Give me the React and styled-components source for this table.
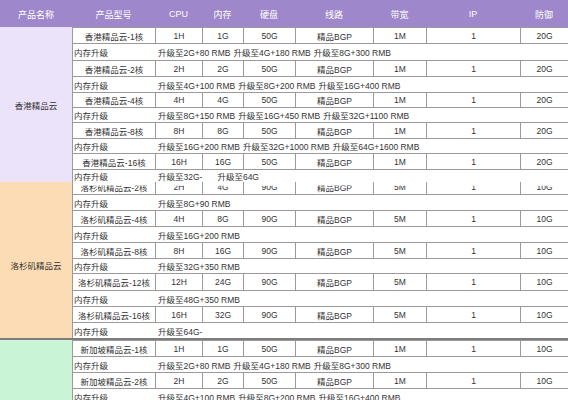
import React from 'react';
import styled, { createGlobalStyle } from 'styled-components';

const Global = createGlobalStyle`
  * { box-sizing: border-box; }
  html, body { margin: 0; padding: 0; background: #fff; }
  body { font-family: "Liberation Sans", "Noto Sans CJK SC", sans-serif; }
`;

const HEAD_COLS = '72px 83px 47px 41px 52px 78px 53px 94px 48px';
const BODY_COLS = '82px 47px 41px 52px 78px 53px 94px 48px';

const Page = styled.div`
  width: 568px;
  height: 400px;
  overflow: hidden;
  display: flex;
  flex-direction: column;
`;

const Header = styled.div`
  display: grid;
  grid-template-columns: ${HEAD_COLS};
  height: 27px;
  flex: none;
  background: #9e87ca;
`;

const HeadCell = styled.div`
  display: flex;
  align-items: center;
  justify-content: center;
  color: #fff;
  font-size: 9px;
  padding-top: 1px;
`;

const Section = styled.div`
  display: flex;
  flex: none;
  border-top: ${(p) => (p.$split ? '2px solid #7d7d7d' : 'none')};
`;

const Label = styled.div`
  width: 72px;
  flex: none;
  display: flex;
  align-items: center;
  justify-content: center;
  background: ${(p) => p.$bg};
  color: #333;
  font-size: 8.5px;
  padding-top: ${(p) => p.$shift || 0}px;
`;

const Body = styled.div`
  flex: 1;
  display: flex;
  flex-direction: column;
  border-left: 1px solid #9a9a9a;
  background: #fff;
`;

const ProductRow = styled.div`
  display: grid;
  grid-template-columns: ${BODY_COLS};
  height: ${(p) => p.$h}px;
  border-top: ${(p) => (p.$noTop ? 'none' : '1px solid #9a9a9a')};
  overflow: hidden;
`;

const Cell = styled.div`
  display: flex;
  align-items: center;
  justify-content: center;
  font-size: 8.5px;
  color: #333;
  white-space: nowrap;
  border-left: ${(p) => (p.$first ? 'none' : '1px solid #9a9a9a')};
`;

const Clipped = styled.span`
  clip-path: inset(38% 0 0 0);
  transform: translateY(-1px);
`;

const UpgradeRow = styled.div`
  display: flex;
  align-items: center;
  height: ${(p) => p.$h}px;
  border-top: 1px solid #9a9a9a;
  font-size: 8.5px;
  color: #333;
  white-space: nowrap;
`;

const UpgradeLabel = styled.div`
  width: 82px;
  flex: none;
  padding-left: 1px;
`;

const UpgradeText = styled.div`
  padding-left: 3px;
  display: flex;
  gap: 3px;
`;

const Part = styled.span`
  margin-left: ${(p) => p.$offset || 0}px;
`;

const head = ['产品名称', '产品型号', 'CPU', '内存', '硬盘', '线路', '带宽', 'IP', '防御'];

const sections = [
  {
    name: '香港精品云',
    bg: '#ebe3f9',
    rows: [
      { cells: ['香港精品云-1核', '1H', '1G', '50G', '精品BGP', '1M', '1', '20G'], h: 16, uh: 17,
        up: ['升级至2G+80 RMB', '升级至4G+180 RMB', '升级至8G+300 RMB'] },
      { cells: ['香港精品云-2核', '2H', '2G', '50G', '精品BGP', '1M', '1', '20G'], h: 16, uh: 16,
        up: ['升级至4G+100 RMB', '升级至8G+200 RMB', '升级至16G+400 RMB'] },
      { cells: ['香港精品云-4核', '4H', '4G', '50G', '精品BGP', '1M', '1', '20G'], h: 15, uh: 15,
        up: ['升级至8G+150 RMB', '升级至16G+450 RMB', '升级至32G+1100 RMB'] },
      { cells: ['香港精品云-8核', '8H', '8G', '50G', '精品BGP', '1M', '1', '20G'], h: 16, uh: 15,
        up: ['升级至16G+200 RMB', '升级至32G+1000 RMB', '升级至64G+1600 RMB'] },
      { cells: ['香港精品云-16核', '16H', '16G', '50G', '精品BGP', '1M', '1', '20G'], h: 16, uh: 13,
        up: ['升级至32G-', '升级至64G'], offsets: [0, 12] },
    ],
  },
  {
    name: '洛杉矶精品云',
    bg: '#fcdcb4',
    shift: 10,
    rows: [
      { cells: ['洛杉矶精品云-2核', '2H', '4G', '90G', '精品BGP', '5M', '1', '10G'], h: 12, uh: 16, clip: true,
        up: ['升级至8G+90 RMB'] },
      { cells: ['洛杉矶精品云-4核', '4H', '8G', '90G', '精品BGP', '5M', '1', '10G'], h: 16, uh: 16,
        up: ['升级至16G+200 RMB'] },
      { cells: ['洛杉矶精品云-8核', '8H', '16G', '90G', '精品BGP', '5M', '1', '10G'], h: 16, uh: 15,
        up: ['升级至32G+350 RMB'] },
      { cells: ['洛杉矶精品云-12核', '12H', '24G', '90G', '精品BGP', '5M', '1', '10G'], h: 17, uh: 16,
        up: ['升级至48G+350 RMB'] },
      { cells: ['洛杉矶精品云-16核', '16H', '32G', '90G', '精品BGP', '5M', '1', '10G'], h: 16, uh: 16,
        up: ['升级至64G-'] },
    ],
  },
  {
    name: '新加坡精品云',
    bg: '#c9f5d6',
    split: true,
    rows: [
      { cells: ['新加坡精品云-1核', '1H', '1G', '50G', '精品BGP', '1M', '1', '10G'], h: 16, uh: 16,
        up: ['升级至2G+80 RMB', '升级至4G+180 RMB', '升级至8G+300 RMB'] },
      { cells: ['新加坡精品云-2核', '2H', '2G', '50G', '精品BGP', '1M', '1', '10G'], h: 16, uh: 16,
        up: ['升级至4G+100 RMB', '升级至8G+200 RMB', '升级至16G+400 RMB'] },
      { cells: ['新加坡精品云-4核', '4H', '4G', '50G', '精品BGP', '1M', '1', '10G'], h: 16, uh: 16,
        up: ['升级至8G+150 RMB', '升级至16G+450 RMB', '升级至32G+1100 RMB'] },
      { cells: ['新加坡精品云-8核', '8H', '8G', '50G', '精品BGP', '1M', '1', '10G'], h: 16, uh: 16,
        up: ['升级至16G+200 RMB', '升级至32G+1000 RMB', '升级至64G+1600 RMB'] },
      { cells: ['新加坡精品云-16核', '16H', '16G', '50G', '精品BGP', '1M', '1', '10G'], h: 16, uh: 16,
        up: ['升级至32G-', '升级至64G'] },
    ],
  },
];

export default function App() {
  return (
    <Page>
      <Global />
      <Header>
        {head.map((h) => (
          <HeadCell key={h}>{h}</HeadCell>
        ))}
      </Header>
      {sections.map((s) => (
        <Section key={s.name} $split={s.split}>
          <Label $bg={s.bg} $shift={s.shift}>{s.name}</Label>
          <Body>
            {s.rows.map((r) => (
              <React.Fragment key={r.cells[0]}>
                <ProductRow $h={r.h} $noTop={r.clip}>
                  {r.cells.map((c, i) => (
                    <Cell key={i} $first={i === 0}>
                      {r.clip ? <Clipped>{c}</Clipped> : c}
                    </Cell>
                  ))}
                </ProductRow>
                <UpgradeRow $h={r.uh}>
                  <UpgradeLabel>内存升级</UpgradeLabel>
                  <UpgradeText>
                    {r.up.map((u, i) => (
                      <Part key={i} $offset={r.offsets ? r.offsets[i] : 0}>{u}</Part>
                    ))}
                  </UpgradeText>
                </UpgradeRow>
              </React.Fragment>
            ))}
          </Body>
        </Section>
      ))}
    </Page>
  );
}
